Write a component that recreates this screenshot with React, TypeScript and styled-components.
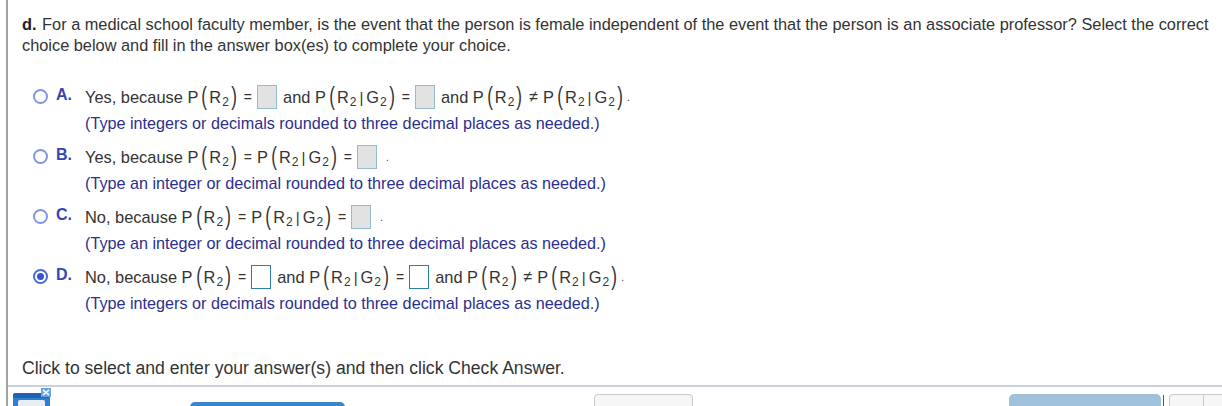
import React from 'react';
import styled, { createGlobalStyle } from 'styled-components';

const GlobalStyle = createGlobalStyle`
  html, body {
    margin: 0;
    padding: 0;
    background: #ffffff;
  }
  body {
    font-family: 'Liberation Sans', Arial, sans-serif;
    color: #333333;
  }
`;

const Page = styled.div`
  height: 406px;
  overflow: hidden;
  margin-left: 6px;
  border-left: 2px solid #a3a3a3;
  display: flex;
  flex-direction: column;
`;

const Question = styled.p`
  margin: 14px 2px 0 14px;
  font-size: 16.35px;
  line-height: 21px;
  color: #333333;
  b {
    font-weight: 700;
    color: #222222;
    margin-right: 1px;
  }
`;

const Options = styled.ul`
  list-style: none;
  margin: 26px 0 0;
  padding: 0 0 0 25px;
  display: flex;
  flex-direction: column;
  gap: 9px;
`;

const OptionRow = styled.li`
  display: grid;
  grid-template-columns: 23px 29px 1fr;
  align-items: start;
`;

const Radio = styled.span<{ $checked?: boolean }>`
  margin-top: 7px;
  width: 15px;
  height: 15px;
  box-sizing: border-box;
  border-radius: 50%;
  border: 2px solid ${(p) => (p.$checked ? '#4a6ad8' : '#8196e2')};
  display: flex;
  align-items: center;
  justify-content: center;
  &::after {
    content: '';
    display: ${(p) => (p.$checked ? 'block' : 'none')};
    width: 7px;
    height: 7px;
    border-radius: 50%;
    background: #3552cf;
  }
`;

const Letter = styled.span`
  font-size: 16px;
  font-weight: 700;
  color: #3546b4;
  line-height: 22px;
  margin-top: 2px;
`;

const Body = styled.div`
  display: flex;
  flex-direction: column;
`;

const Statement = styled.div`
  display: flex;
  align-items: center;
  height: 30px;
  font-size: 16.4px;
  color: #333333;
  white-space: pre;
`;

const Hint = styled.div`
  font-size: 16.2px;
  line-height: 20px;
  margin-top: 1px;
  color: #2b2f8f;
`;

// tall, thin brackets like the math renderer draws
const Paren = styled.span`
  font-size: 18px;
  line-height: 1;
  display: inline-block;
  transform: scale(0.95, 1.4);
  margin: 0 2px 0 3px;
  color: #333333;
`;

const CloseParen = styled(Paren)`
  margin: 0 1px 0 2px;
`;

const Sub = styled.span`
  font-size: 12px;
  position: relative;
  top: 5px;
  margin-left: 1px;
`;

const Bar = styled.span`
  margin: 0 3px;
  font-size: 15px;
`;

const Rel = styled.span<{ $big?: boolean }>`
  font-size: ${(p) => (p.$big ? '16px' : '14px')};
  margin: 0 5px 0 6px;
`;

const Dot = styled.span`
  font-size: 10px;
  margin-left: 3px;
`;

const AnswerBox = styled.span<{ $active?: boolean }>`
  display: inline-block;
  width: 20px;
  height: 24px;
  box-sizing: border-box;
  background: ${(p) => (p.$active ? '#ffffff' : '#e2e2e2')};
  border: ${(p) => (p.$active ? '1.5px solid #2f7ea3' : '1px solid #94bccb')};
  margin: 0 6px 0 0;
`;

const Prompt = styled.div`
  margin: 45px 14px 0;
  font-size: 17.6px;
  line-height: 20px;
  color: #333333;
`;

const Rule = styled.div`
  margin-top: 7px;
  height: 0;
  border-top: 2px solid #cbd2de;
`;

const Toolbar = styled.div`
  display: flex;
  align-items: flex-start;
  padding-left: 4px;
  height: 40px;
`;

const ToolIcon = styled.svg`
  margin-top: 1px;
  flex: none;
`;

const PrimaryButton = styled.div`
  margin: 15px 0 0 138px;
  width: 155px;
  height: 24px;
  border-radius: 5px;
  background: #3a86c8;
  flex: none;
`;

const PlainButton = styled.div<{ $width: number; $left: number }>`
  margin: 7px 0 0 ${(p) => p.$left}px;
  width: ${(p) => p.$width}px;
  height: 24px;
  box-sizing: border-box;
  border: 1px solid #c9c9c9;
  border-radius: 4px;
  background: #f6f6f6;
  flex: none;
  display: flex;
`;

const SoftButton = styled.div`
  margin: 7px 0 0 316px;
  width: 152px;
  height: 24px;
  border-radius: 5px;
  background: #9fc1dc;
  flex: none;
`;

const Divider = styled.div`
  margin: 8px 0 0 2px;
  width: 1px;
  height: 16px;
  background: #555555;
  flex: none;
`;

const Split = styled.span`
  margin-left: 33px;
  border-left: 1px solid #c9c9c9;
`;

function P({ children }: { children: React.ReactNode }) {
  return (
    <>
      P<Paren>(</Paren>
      {children}
      <CloseParen>)</CloseParen>
    </>
  );
}

const R2 = () => (
  <>
    R<Sub>2</Sub>
  </>
);

const R2G2 = () => (
  <>
    R<Sub>2</Sub>
    <Bar>|</Bar>G<Sub>2</Sub>
  </>
);

const Eq = () => <Rel>=</Rel>;

const TYPE_INT = '(Type integers or decimals rounded to three decimal places as needed.)';
const TYPE_ONE = '(Type an integer or decimal rounded to three decimal places as needed.)';

function TwoBoxes({ lead, active }: { lead: string; active?: boolean }) {
  return (
    <Statement>
      {lead} <P><R2 /></P>
      <Eq />
      <AnswerBox $active={active} />
      and <P><R2G2 /></P>
      <Eq />
      <AnswerBox $active={active} />
      and <P><R2 /></P>
      <Rel $big>≠</Rel>
      <P><R2G2 /></P>
      <Dot>.</Dot>
    </Statement>
  );
}

function OneBox({ lead }: { lead: string }) {
  return (
    <Statement>
      {lead} <P><R2 /></P>
      <Eq />
      <P><R2G2 /></P>
      <Eq />
      <AnswerBox />
      <Dot>.</Dot>
    </Statement>
  );
}

export default function App() {
  return (
    <>
      <GlobalStyle />
      <Page>
        <Question>
          <b>d.</b> For a medical school faculty member, is the event that the person is female independent of the
          event that the person is an associate professor? Select the correct choice below and fill in the answer
          box(es) to complete your choice.
        </Question>

        <Options>
          <OptionRow>
            <Radio />
            <Letter>A.</Letter>
            <Body>
              <TwoBoxes lead="Yes, because" />
              <Hint>{TYPE_INT}</Hint>
            </Body>
          </OptionRow>
          <OptionRow>
            <Radio />
            <Letter>B.</Letter>
            <Body>
              <OneBox lead="Yes, because" />
              <Hint>{TYPE_ONE}</Hint>
            </Body>
          </OptionRow>
          <OptionRow>
            <Radio />
            <Letter>C.</Letter>
            <Body>
              <OneBox lead="No, because" />
              <Hint>{TYPE_ONE}</Hint>
            </Body>
          </OptionRow>
          <OptionRow>
            <Radio $checked />
            <Letter>D.</Letter>
            <Body>
              <TwoBoxes lead="No, because" active />
              <Hint>{TYPE_INT}</Hint>
            </Body>
          </OptionRow>
        </Options>

        <Prompt>Click to select and enter your answer(s) and then click Check Answer.</Prompt>
        <Rule />

        <Toolbar>
          <ToolIcon width="40" height="20" viewBox="0 0 40 20">
            <rect x="1" y="5" width="37" height="18" rx="4" fill="#2f7fd0" />
            <rect x="1" y="5" width="37" height="5" rx="2" fill="#1f63b4" />
            <rect x="6" y="12" width="27" height="10" rx="2" fill="#e9eef5" />
            <rect x="29" y="0" width="10" height="9" fill="#6aa4e6" />
            <path d="M31 2 L37 7 M37 2 L31 7" stroke="#ffffff" strokeWidth="1.6" />
          </ToolIcon>
          <PrimaryButton />
          <PlainButton $width={99} $left={249} />
          <SoftButton />
          <Divider />
          <PlainButton $width={60} $left={5}>
            <Split />
          </PlainButton>
        </Toolbar>
      </Page>
    </>
  );
}
